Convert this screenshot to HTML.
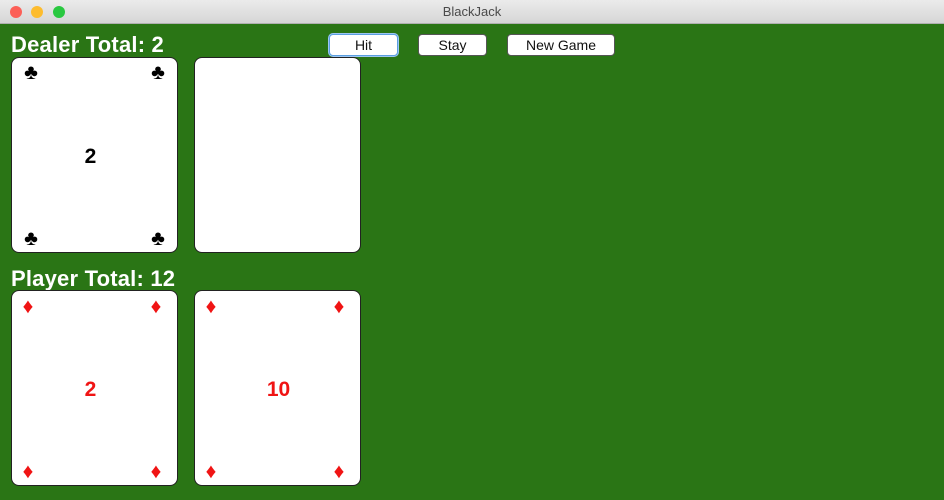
<!DOCTYPE html>
<html><head><meta charset="utf-8"><style>
*{margin:0;padding:0;box-sizing:border-box}
body{width:944px;height:500px;overflow:hidden;background:#2a7515;font-family:"Liberation Sans",sans-serif;position:relative}
.title{position:absolute;left:0;top:0;width:944px;height:24px;background:linear-gradient(#ebebeb,#d6d6d6);border-bottom:1px solid #b0b0b0;text-align:center;font-size:13px;line-height:24px;color:#4a4a4a}
.dot{position:absolute;top:6px;width:12px;height:12px;border-radius:50%}
.lbl{position:absolute;left:11px;color:#fff;font-weight:bold;font-size:22px;letter-spacing:0.2px}
.btn{position:absolute;top:34px;height:22px;background:#fff;border:1px solid #555;border-radius:4px;font-size:14px;text-align:center;line-height:20px;color:#111}
.card{position:absolute;width:167px;height:196px;background:#fff;border:1px solid #222;border-radius:8px}
.s{position:absolute;font-size:21px;line-height:20px;width:20px;text-align:center}
.n{position:absolute;left:0;width:157px;top:87px;text-align:center;font-weight:bold;font-size:21px}
.r{color:#f01414}
</style></head><body>
<div class="title">BlackJack
<div class="dot" style="left:10px;background:#fc5f57"></div>
<div class="dot" style="left:31px;background:#fdbc2e"></div>
<div class="dot" style="left:53px;background:#29c840"></div></div>
<div class="lbl" style="top:32px">Dealer Total: 2</div>
<div class="btn" style="left:329px;width:69px;border-color:#5b9fe0;box-shadow:0 0 0 1px #9cc6f2">Hit</div>
<div class="btn" style="left:418px;width:69px">Stay</div>
<div class="btn" style="left:507px;width:108px">New Game</div>
<div class="card" style="left:11px;top:57px">
<div class="s" style="left:9px;top:5px">♣</div><div class="s" style="left:136px;top:5px">♣</div>
<div class="n">2</div>
<div class="s" style="left:9px;bottom:3px">♣</div><div class="s" style="left:136px;bottom:3px">♣</div></div>
<div class="card" style="left:194px;top:57px"></div>
<div class="lbl" style="top:266px">Player Total: 12</div>
<div class="card r" style="left:11px;top:290px">
<div class="s" style="left:6px;top:6px">♦</div><div class="s" style="left:134px;top:6px">♦</div>
<div class="n">2</div>
<div class="s" style="left:6px;bottom:3px">♦</div><div class="s" style="left:134px;bottom:3px">♦</div></div>
<div class="card r" style="left:194px;top:290px">
<div class="s" style="left:6px;top:6px">♦</div><div class="s" style="left:134px;top:6px">♦</div>
<div class="n" style="width:167px">10</div>
<div class="s" style="left:6px;bottom:3px">♦</div><div class="s" style="left:134px;bottom:3px">♦</div></div>
</body></html>
